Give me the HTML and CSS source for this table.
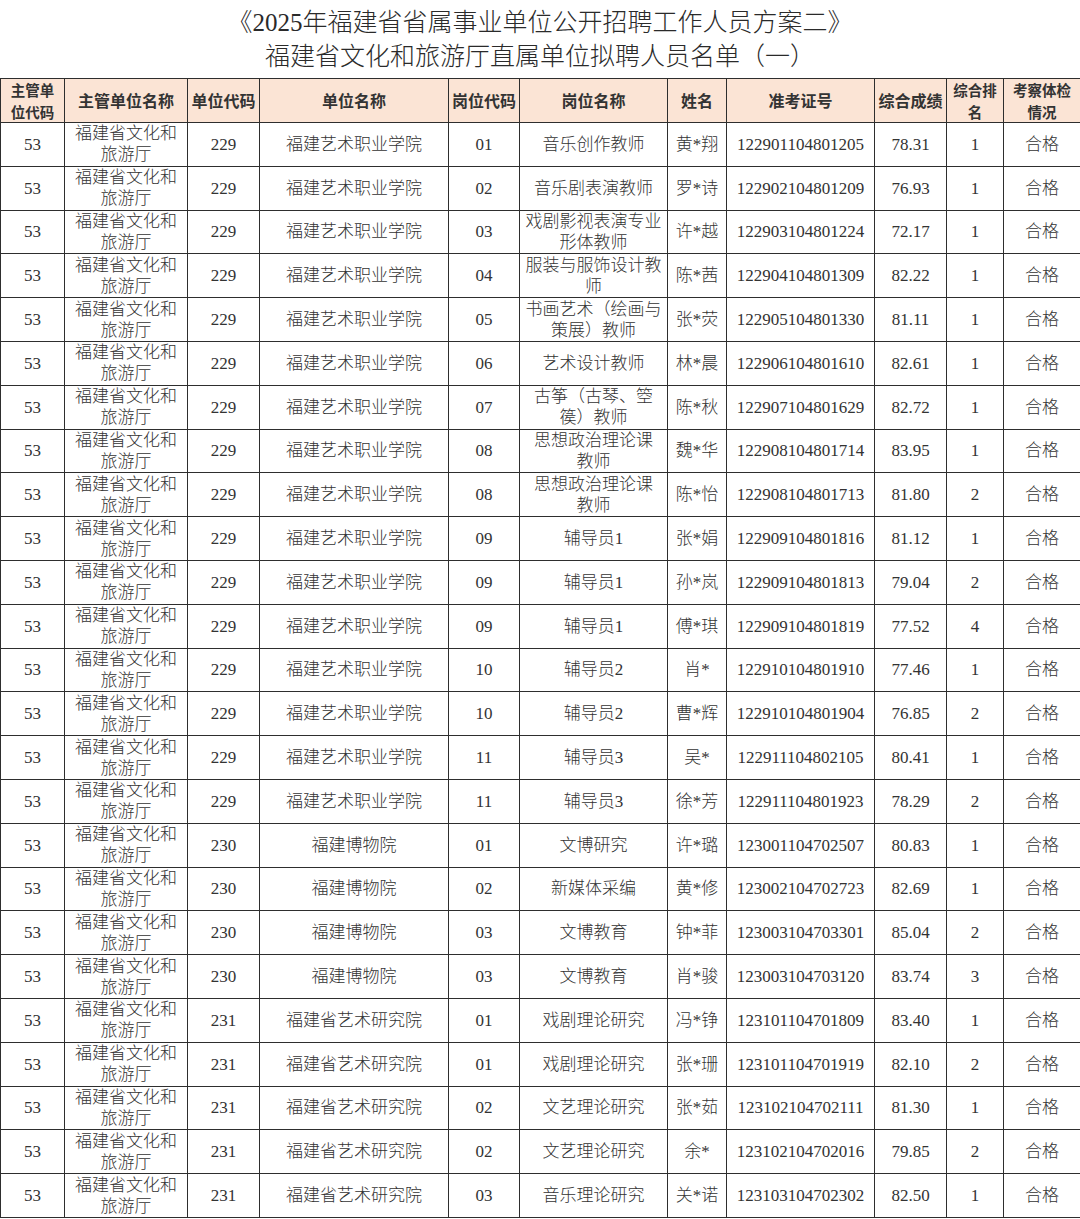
FILE: index.html
```html
<!DOCTYPE html>
<html lang="zh-CN">
<head>
<meta charset="utf-8">
<link rel="stylesheet" href="styles.css">
</head>
<body>
<div class="page">
  <div class="title">
    <div>《2025年福建省省属事业单位公开招聘工作人员方案二》</div>
    <div>福建省文化和旅游厅直属单位拟聘人员名单（一）</div>
  </div>
  <table class="list">
    <colgroup>
      <col class="c1"><col class="c2"><col class="c3"><col class="c4"><col class="c5"><col class="c6"><col class="c7"><col class="c8"><col class="c9"><col class="c10"><col class="c11">
    </colgroup>
    <thead>
      <tr>
        <th class="two">主管单<br>位代码</th><th>主管单位名称</th><th>单位代码</th><th>单位名称</th><th>岗位代码</th><th>岗位名称</th><th>姓名</th><th>准考证号</th><th>综合成绩</th><th class="two">综合排<br>名</th><th class="two">考察体检<br>情况</th>
      </tr>
    </thead>
    <tbody>
      <tr><td>53</td><td>福建省文化和<br>旅游厅</td><td>229</td><td>福建艺术职业学院</td><td>01</td><td>音乐创作教师</td><td>黄*翔</td><td>122901104801205</td><td>78.31</td><td>1</td><td>合格</td></tr>
      <tr><td>53</td><td>福建省文化和<br>旅游厅</td><td>229</td><td>福建艺术职业学院</td><td>02</td><td>音乐剧表演教师</td><td>罗*诗</td><td>122902104801209</td><td>76.93</td><td>1</td><td>合格</td></tr>
      <tr><td>53</td><td>福建省文化和<br>旅游厅</td><td>229</td><td>福建艺术职业学院</td><td>03</td><td>戏剧影视表演专业<br>形体教师</td><td>许*越</td><td>122903104801224</td><td>72.17</td><td>1</td><td>合格</td></tr>
      <tr><td>53</td><td>福建省文化和<br>旅游厅</td><td>229</td><td>福建艺术职业学院</td><td>04</td><td>服装与服饰设计教<br>师</td><td>陈*茜</td><td>122904104801309</td><td>82.22</td><td>1</td><td>合格</td></tr>
      <tr><td>53</td><td>福建省文化和<br>旅游厅</td><td>229</td><td>福建艺术职业学院</td><td>05</td><td>书画艺术（绘画与<br>策展）教师</td><td>张*荧</td><td>122905104801330</td><td>81.11</td><td>1</td><td>合格</td></tr>
      <tr><td>53</td><td>福建省文化和<br>旅游厅</td><td>229</td><td>福建艺术职业学院</td><td>06</td><td>艺术设计教师</td><td>林*晨</td><td>122906104801610</td><td>82.61</td><td>1</td><td>合格</td></tr>
      <tr><td>53</td><td>福建省文化和<br>旅游厅</td><td>229</td><td>福建艺术职业学院</td><td>07</td><td>古筝（古琴、箜<br>篌）教师</td><td>陈*秋</td><td>122907104801629</td><td>82.72</td><td>1</td><td>合格</td></tr>
      <tr><td>53</td><td>福建省文化和<br>旅游厅</td><td>229</td><td>福建艺术职业学院</td><td>08</td><td>思想政治理论课<br>教师</td><td>魏*华</td><td>122908104801714</td><td>83.95</td><td>1</td><td>合格</td></tr>
      <tr><td>53</td><td>福建省文化和<br>旅游厅</td><td>229</td><td>福建艺术职业学院</td><td>08</td><td>思想政治理论课<br>教师</td><td>陈*怡</td><td>122908104801713</td><td>81.80</td><td>2</td><td>合格</td></tr>
      <tr><td>53</td><td>福建省文化和<br>旅游厅</td><td>229</td><td>福建艺术职业学院</td><td>09</td><td>辅导员1</td><td>张*娟</td><td>122909104801816</td><td>81.12</td><td>1</td><td>合格</td></tr>
      <tr><td>53</td><td>福建省文化和<br>旅游厅</td><td>229</td><td>福建艺术职业学院</td><td>09</td><td>辅导员1</td><td>孙*岚</td><td>122909104801813</td><td>79.04</td><td>2</td><td>合格</td></tr>
      <tr><td>53</td><td>福建省文化和<br>旅游厅</td><td>229</td><td>福建艺术职业学院</td><td>09</td><td>辅导员1</td><td>傅*琪</td><td>122909104801819</td><td>77.52</td><td>4</td><td>合格</td></tr>
      <tr><td>53</td><td>福建省文化和<br>旅游厅</td><td>229</td><td>福建艺术职业学院</td><td>10</td><td>辅导员2</td><td>肖*</td><td>122910104801910</td><td>77.46</td><td>1</td><td>合格</td></tr>
      <tr><td>53</td><td>福建省文化和<br>旅游厅</td><td>229</td><td>福建艺术职业学院</td><td>10</td><td>辅导员2</td><td>曹*辉</td><td>122910104801904</td><td>76.85</td><td>2</td><td>合格</td></tr>
      <tr><td>53</td><td>福建省文化和<br>旅游厅</td><td>229</td><td>福建艺术职业学院</td><td>11</td><td>辅导员3</td><td>吴*</td><td>122911104802105</td><td>80.41</td><td>1</td><td>合格</td></tr>
      <tr><td>53</td><td>福建省文化和<br>旅游厅</td><td>229</td><td>福建艺术职业学院</td><td>11</td><td>辅导员3</td><td>徐*芳</td><td>122911104801923</td><td>78.29</td><td>2</td><td>合格</td></tr>
      <tr><td>53</td><td>福建省文化和<br>旅游厅</td><td>230</td><td>福建博物院</td><td>01</td><td>文博研究</td><td>许*璐</td><td>123001104702507</td><td>80.83</td><td>1</td><td>合格</td></tr>
      <tr><td>53</td><td>福建省文化和<br>旅游厅</td><td>230</td><td>福建博物院</td><td>02</td><td>新媒体采编</td><td>黄*修</td><td>123002104702723</td><td>82.69</td><td>1</td><td>合格</td></tr>
      <tr><td>53</td><td>福建省文化和<br>旅游厅</td><td>230</td><td>福建博物院</td><td>03</td><td>文博教育</td><td>钟*菲</td><td>123003104703301</td><td>85.04</td><td>2</td><td>合格</td></tr>
      <tr><td>53</td><td>福建省文化和<br>旅游厅</td><td>230</td><td>福建博物院</td><td>03</td><td>文博教育</td><td>肖*骏</td><td>123003104703120</td><td>83.74</td><td>3</td><td>合格</td></tr>
      <tr><td>53</td><td>福建省文化和<br>旅游厅</td><td>231</td><td>福建省艺术研究院</td><td>01</td><td>戏剧理论研究</td><td>冯*铮</td><td>123101104701809</td><td>83.40</td><td>1</td><td>合格</td></tr>
      <tr><td>53</td><td>福建省文化和<br>旅游厅</td><td>231</td><td>福建省艺术研究院</td><td>01</td><td>戏剧理论研究</td><td>张*珊</td><td>123101104701919</td><td>82.10</td><td>2</td><td>合格</td></tr>
      <tr><td>53</td><td>福建省文化和<br>旅游厅</td><td>231</td><td>福建省艺术研究院</td><td>02</td><td>文艺理论研究</td><td>张*茹</td><td>123102104702111</td><td>81.30</td><td>1</td><td>合格</td></tr>
      <tr><td>53</td><td>福建省文化和<br>旅游厅</td><td>231</td><td>福建省艺术研究院</td><td>02</td><td>文艺理论研究</td><td>余*</td><td>123102104702016</td><td>79.85</td><td>2</td><td>合格</td></tr>
      <tr><td>53</td><td>福建省文化和<br>旅游厅</td><td>231</td><td>福建省艺术研究院</td><td>03</td><td>音乐理论研究</td><td>关*诺</td><td>123103104702302</td><td>82.50</td><td>1</td><td>合格</td></tr>
    </tbody>
  </table>
</div>
</body>
</html>
```

FILE: styles.css
```css
html, body {
  margin: 0;
  padding: 0;
  background: #ffffff;
}

.page {
  width: 1080px;
  font-family: "Liberation Serif", "Noto Sans CJK SC", serif;
  color: #2b2b2b;
}

.title {
  height: 78px;
  display: flex;
  flex-direction: column;
  align-items: center;
  justify-content: center;
  font-family: "Liberation Serif", "Noto Sans CJK SC", serif;
  font-weight: 300;
  font-size: 25px;
  line-height: 34px;
  color: #2a2a2a;
  padding-top: 2px;
  box-sizing: border-box;
}

.list {
  width: 1080px;
  border-collapse: collapse;
  table-layout: fixed;
}

.c1 { width: 64px; }
.c2 { width: 123px; }
.c3 { width: 72px; }
.c4 { width: 189px; }
.c5 { width: 71px; }
.c6 { width: 148px; }
.c7 { width: 59px; }
.c8 { width: 148px; }
.c9 { width: 72px; }
.c10 { width: 57px; }
.c11 { width: 77px; }

.list th,
.list td {
  border: 1px solid #2e2e2e;
  text-align: center;
  vertical-align: middle;
  padding: 0;
  overflow: hidden;
  white-space: nowrap;
}

.list thead tr {
  height: 44px;
}

.list th {
  background: #fbe4d5;
  font-family: "Noto Sans CJK SC", sans-serif;
  font-weight: 700;
  font-size: 16px;
  line-height: 21px;
  color: #333333;
}

.list th.two {
  font-size: 14.5px;
  line-height: 21.3px;
}

.list tbody tr {
  height: 43.8px;
}

.list td {
  font-weight: 300;
  font-size: 17px;
  line-height: 21px;
  color: #333333;
}
```
